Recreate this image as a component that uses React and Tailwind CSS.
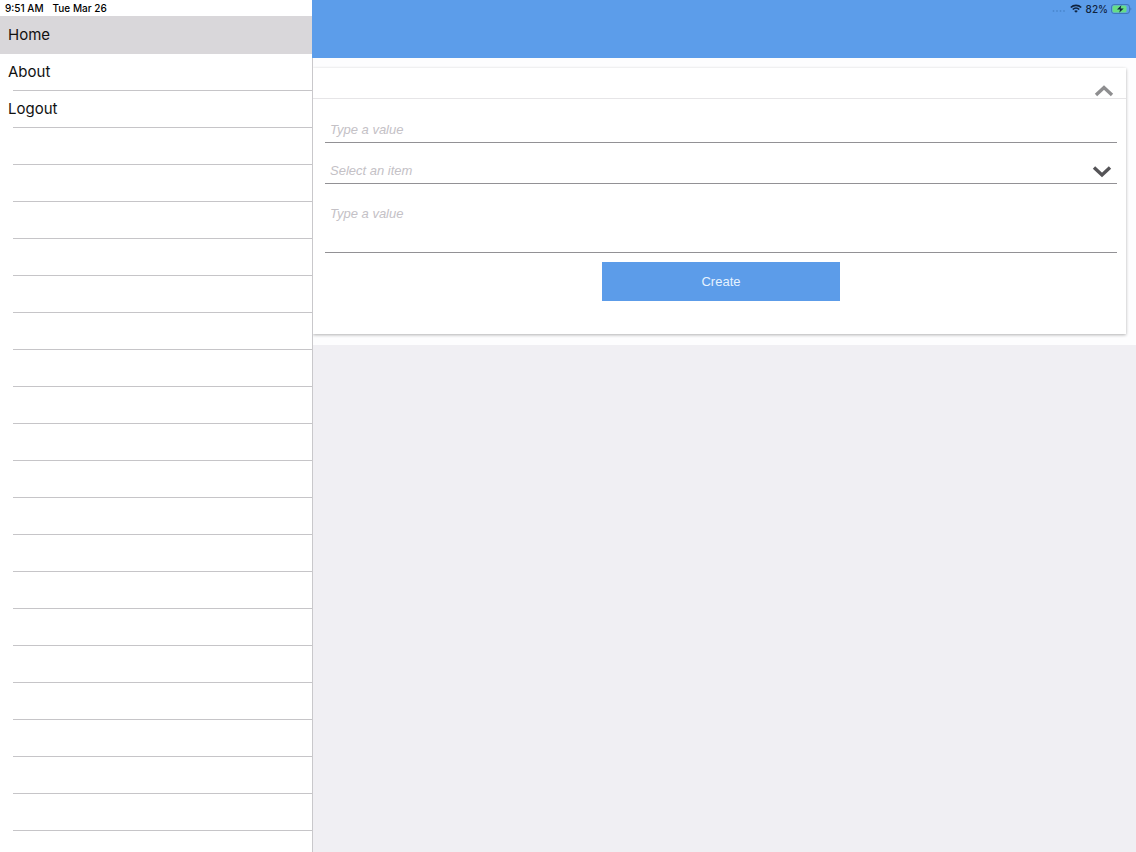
import React from 'react';

const menuItems = ['Home', 'About', 'Logout'];
const emptyRows = Array.from({ length: 19 });

const StatusIcons = () => {
    return (
        <div className="flex h-[17px] items-center justify-end pr-1 text-[#10233d]">
            <svg className="mr-1 mt-1 h-1 w-[14px]" viewBox="0 0 14 4" fill="#4b88cf" aria-hidden="true">
                <circle cx="1.5" cy="2" r="0.9" />
                <circle cx="5" cy="2" r="0.9" />
                <circle cx="8.5" cy="2" r="0.9" />
                <circle cx="12" cy="2" r="0.9" />
            </svg>
            <svg className="mr-1 h-[9px] w-3" viewBox="0 0 12 9" fill="none" stroke="currentColor" strokeWidth="1.7" aria-hidden="true">
                <path d="M0.8 3.5a7.4 7.4 0 0 1 10.4 0" />
                <path d="M2.8 5.5a4.6 4.6 0 0 1 6.4 0" />
                <path d="M6 8.8 4.2 7a2.6 2.6 0 0 1 3.6 0z" fill="currentColor" stroke="none" />
            </svg>
            <span className="mr-[3px] text-[10px] font-medium leading-none">82%</span>
            <svg className="h-[10px] w-[21px]" viewBox="0 0 21 10" aria-hidden="true">
                <rect x="0.5" y="0.5" width="18" height="9" rx="2.5" fill="none" stroke="#3a6fae" strokeWidth="0.8" />
                <rect x="1.5" y="1.5" width="14" height="7" rx="1.5" fill="#66dd85" />
                <path d="M19.5 3.4c1 .4 1 2.8 0 3.2z" fill="#3a6fae" />
                <path d="M10.4 1.2 6 5.5h3.1L8.2 8.8l4.500-4.400H9.600z" fill="#10233d" />
            </svg>
        </div>
    );
};

const Sidebar = () => {
    return (
        <aside className="w-[312px] shrink-0 bg-white">
            <div className="flex h-4 items-center gap-[9px] pl-[5px] text-[10px] font-medium text-black">
                <span>9:51 AM</span>
                <span>Tue Mar 26</span>
            </div>
            <nav>
                <ul>
                    {menuItems.map((item, index) => (
                        <li key={item} className={index === 0 ? 'bg-[#d9d7da]' : ''}>
                            <a href="#" className={`flex flex-col pl-2 text-[15px] text-[#111] ${index === 0 ? 'h-[38px]' : 'h-[37px]'}`}>
                                <span className="flex flex-1 items-center">{item}</span>
                                <span className={index === 0 ? '' : 'ml-[5px] h-px bg-[#c6c5c8]'} />
                            </a>
                        </li>
                    ))}
                </ul>
                <div aria-hidden="true">
                    {emptyRows.map((_, index) => (
                        <div key={index} className="ml-[13px] h-[37px] border-b border-[#c6c5c8]" />
                    ))}
                </div>
            </nav>
        </aside>
    );
};

const CreateForm = () => {
    const field = 'block w-full border-b border-[#929195] px-[5px] text-[13px] italic outline-none';

    return (
        <section className="mr-[10px] bg-white font-['Liberation_Sans',Arial,sans-serif] shadow-[0_1px_3px_rgba(0,0,0,0.3)]">
            <div className="flex h-[31px] items-end justify-end border-b border-[#e6e5e7] pr-3">
                <button type="button" aria-label="Collapse" className="mb-px text-[#8e8e90]">
                    <svg className="block h-[14px] w-5" viewBox="0 0 20 14" fill="none" stroke="currentColor" strokeWidth="3.4" aria-hidden="true">
                        <path d="M2 12 10 4.500l8 7.500" />
                    </svg>
                </button>
            </div>
            <form className="flex flex-col pb-[33px] pl-3 pr-[9px]">
                <input
                    type="text"
                    aria-label="Value"
                    placeholder="Type a value"
                    className={`${field} mt-[17px] h-[27px] placeholder:text-[#c4c1c6]`}
                />
                <div className="relative mt-[15px]">
                    <select aria-label="Item" defaultValue="" className={`${field} h-[26px] appearance-none bg-transparent pt-px text-[#c4c1c6]`}>
                        <option value="">Select an item</option>
                    </select>
                    <svg className="pointer-events-none absolute right-[5px] top-[6px] h-[14px] w-5" viewBox="0 0 20 14" fill="none" stroke="#555457" strokeWidth="3.4" aria-hidden="true">
                        <path d="M2 3.500 10 11l8-7.500" />
                    </svg>
                </div>
                <textarea
                    aria-label="Description"
                    placeholder="Type a value"
                    className={`${field} mt-4 h-[53px] resize-none pt-1 placeholder:text-[#c4c1c6]`}
                />
                <button type="button" className="mt-[9px] h-[39px] w-3/10 self-center bg-[#5c9ce9] text-[13px] text-[#e6f2ff]">
                    Create
                </button>
            </form>
        </section>
    );
};

const App = () => {
    return (
        <div className="flex min-h-screen font-[Inter,'Liberation_Sans',sans-serif]">
            <Sidebar />
            <main className="flex min-w-0 flex-1 flex-col">
                <header className="h-[58px] bg-[#5c9dea]">
                    <StatusIcons />
                </header>
                <div className="flex-1 border-l border-[#c9c8cb] bg-[#f0eff3]">
                    <div className="overflow-hidden bg-[#fdfdfe] pb-[11px] pt-[10px]">
                        <CreateForm />
                    </div>
                </div>
            </main>
        </div>
    );
};

export default App;
